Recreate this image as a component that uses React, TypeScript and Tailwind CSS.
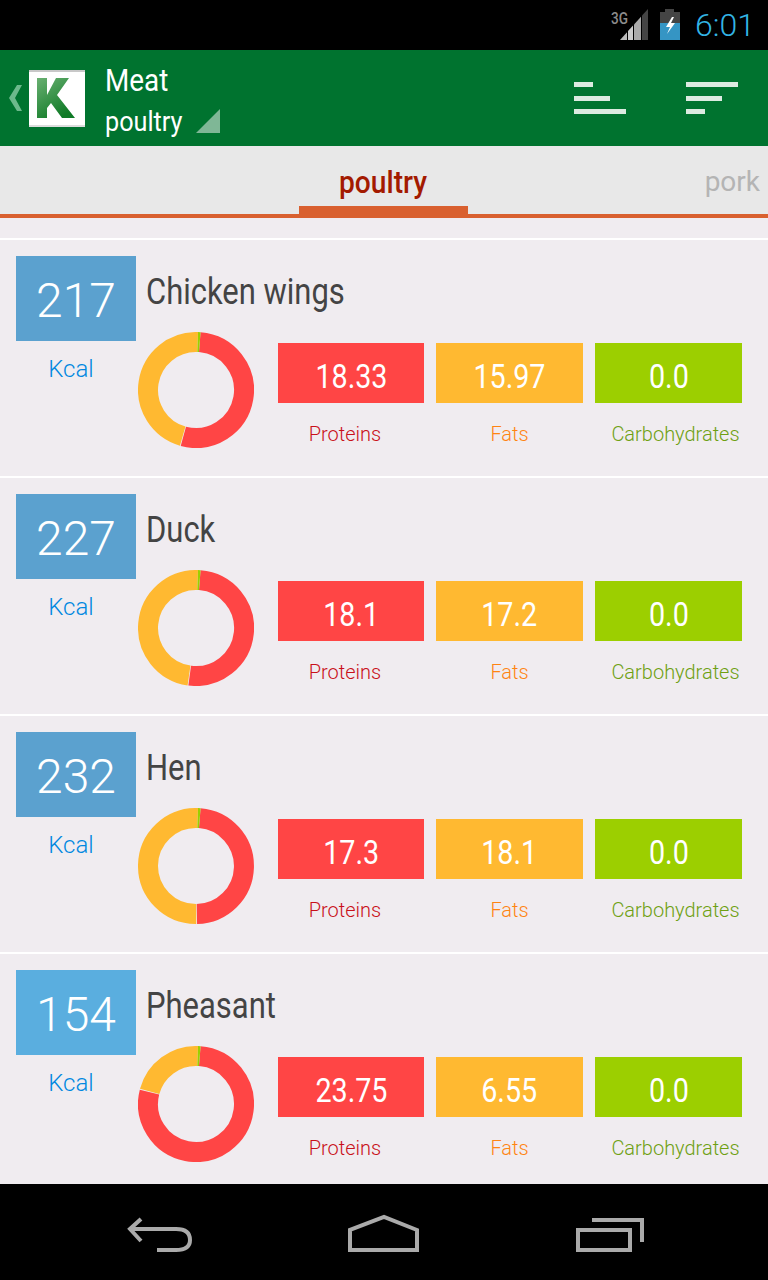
const foods = [
  { kcal: '217', name: 'Chicken wings', p: '18.33', f: '15.97', c: '0.0', box: 'bg-[#5ba1cf]' },
  { kcal: '227', name: 'Duck', p: '18.1', f: '17.2', c: '0.0', box: 'bg-[#5ba1cf]' },
  { kcal: '232', name: 'Hen', p: '17.3', f: '18.1', c: '0.0', box: 'bg-[#5ba1cf]' },
  { kcal: '154', name: 'Pheasant', p: '23.75', f: '6.55', c: '0.0', box: 'bg-[#5aaedf]' },
];

function arc(from: number, to: number) {
  const r = 48;
  const pt = (deg: number) => {
    const a = ((deg - 90) * Math.PI) / 180;
    return `${(58 + r * Math.cos(a)).toFixed(2)} ${(58 + r * Math.sin(a)).toFixed(2)}`;
  };
  return `M${pt(from)} A${r} ${r} 0 ${to - from > 180 ? 1 : 0} 1 ${pt(to)}`;
}

function Donut({ p, f }: { p: number; f: number }) {
  const split = 4.5 + (p / (p + f)) * 357;
  return (
    <svg width="116" height="116" viewBox="0 0 116 116" className="mt-[2px] shrink-0">
      <g fill="none" strokeWidth="20">
        <path d={arc(4.5, split)} stroke="#ff4545" />
        <path d={arc(split + 0.8, 362)} stroke="#ffb931" />
        <path d={arc(362, 364.5)} stroke="#9ccf00" />
      </g>
    </svg>
  );
}

function Macro({ value, label, box, text, w, shift }: { value: string; label: string; box: string; text: string; w: string; shift: string }) {
  return (
    <div className={`flex flex-col items-center ${w}`}>
      <div className={`flex h-[60px] w-full items-center justify-center pt-[7px] text-[33px] text-white ${box}`}>
        <span className="inline-block origin-center scale-x-[0.87]">{value}</span>
      </div>
      <div className={`mt-[19px] text-[20px] leading-6 font-light whitespace-nowrap ${text} ${shift}`}>{label}</div>
    </div>
  );
}

function FoodRow({ food }: { food: (typeof foods)[number] }) {
  return (
    <div className="flex h-[238px] border-t-2 border-white pt-4 pl-4">
      <div className="flex w-[120px] shrink-0 flex-col items-center">
        <div className={`flex h-[85px] w-full items-center justify-center pt-[5px] text-[48px] font-light text-white ${food.box}`}>
          {food.kcal}
        </div>
        <div className="mt-[14px] pr-[10px] text-[24px] leading-7 font-light text-[#0088e0]">Kcal</div>
      </div>
      <div className="flex flex-col">
        <div className="ml-[10px] h-[74px] origin-left scale-x-[0.86] text-[36px] leading-[72px] font-normal whitespace-nowrap text-[#444444]">
          {food.name}
        </div>
        <div className="ml-[2px] flex items-start">
          <Donut p={parseFloat(food.p)} f={parseFloat(food.f)} />
          <div className="mt-[13px] ml-6 flex gap-3">
            <Macro value={food.p} label="Proteins" box="bg-[#ff4545]" text="text-[#c9101a]" w="w-[146px]" shift="pr-[12px]" />
            <Macro value={food.f} label="Fats" box="bg-[#ffb931]" text="text-[#ff8412]" w="w-[147px]" shift="" />
            <Macro value={food.c} label="Carbohydrates" box="bg-[#9ccf00]" text="text-[#6ea012]" w="w-[147px]" shift="pl-[14px]" />
          </div>
        </div>
      </div>
    </div>
  );
}

export default function App() {
  return (
    <div className="flex h-[1280px] w-[768px] flex-col overflow-hidden bg-[#f0ecf0] font-['Roboto',sans-serif]">
      <div className="flex h-[50px] items-center justify-end bg-black pr-[13px]">
        <div className="relative mr-[11px] h-[32px] w-[38px]">
          <span className="absolute top-[2px] left-0 origin-left scale-x-[0.85] text-[16px] leading-4 font-medium text-[#8c8c8c]">3G</span>
          <svg width="30" height="32" viewBox="0 0 30 32" className="absolute top-0 left-[8px]">
            <path d="M1 31 L8 23.2 V31Z" fill="#bbbbbb" />
            <path d="M9 22.1 L14 16.6 V31 H9Z" fill="#cccccc" />
            <path d="M15 15.5 L22 7.7 V31 H15Z" fill="#aaaaaa" />
            <path d="M23 6.6 L29 0 V31 H23Z" fill="#444444" />
          </svg>
        </div>
        <svg width="20" height="32" viewBox="0 0 20 32" className="mr-[15px]">
          <path d="M5 0 H14 V3 H20 V31 H0 V3 H5Z" fill="#444444" />
          <rect x="0" y="14" width="20" height="17" fill="#3595c4" />
          <path d="M12 8 L6 18 H10 L7 25 L15 14 H11 L14 8Z" fill="#ffffff" />
        </svg>
        <span className="text-[32px] leading-none font-light text-[#33b5e5]">6:01</span>
      </div>

      <div className="flex h-[96px] items-center bg-[#00732f]">
        <svg width="16" height="28" viewBox="0 0 16 28" className="ml-[8px]">
          <path d="M14 1 L7 14 L14 27 H9 L1 14 L9 1Z" fill="#6db98c" />
        </svg>
        <svg width="56" height="57" viewBox="0 0 56 57" className="ml-[5px]">
          <defs>
            <linearGradient id="kGrad" x1="0" y1="0" x2="0.6" y2="1">
              <stop offset="0" stopColor="#6ab072" />
              <stop offset="1" stopColor="#0f7a26" />
            </linearGradient>
          </defs>
          <rect width="56" height="57" fill="#ffffff" />
          <rect width="56" height="2" fill="#c8c8c8" />
          <rect y="55" width="56" height="2" fill="#dddddd" />
          <path d="M8 8 H18 V25 L27 8 H40 L28 25 L46 48 H33 L22 33 L18 38 V48 H8Z" fill="url(#kGrad)" />
        </svg>
        <div className="ml-[20px] flex flex-col pt-[4px]">
          <div className="h-[44px] origin-left scale-x-[0.87] text-[32px] leading-[42px] text-white">Meat</div>
          <div className="flex h-[38px] items-center">
            <span className="w-[91px] origin-left scale-x-[0.9] text-[28px] leading-8 whitespace-nowrap text-white">poultry</span>
            <svg width="24" height="24" viewBox="0 0 24 24" className="-mt-[2px]">
              <path d="M24 0 V24 H0Z" fill="#7fb796" />
            </svg>
          </div>
        </div>
        <svg width="52" height="34" viewBox="0 0 52 34" className="mt-[2px] mr-[60px] ml-auto">
          <g fill="#dcebe1">
            <rect x="0" y="0" width="19" height="5" />
            <rect x="0" y="14" width="36" height="5" />
            <rect x="0" y="27" width="52" height="5" />
          </g>
        </svg>
        <svg width="52" height="34" viewBox="0 0 52 34" className="mt-[2px] mr-[30px]">
          <g fill="#dcebe1">
            <rect x="0" y="0" width="52" height="5" />
            <rect x="0" y="14" width="36" height="5" />
            <rect x="0" y="27" width="19" height="5" />
          </g>
        </svg>
      </div>

      <div className="relative h-[72px] border-b-4 border-[#d9602f] bg-[#e8e8e8]">
        <div className="absolute top-0 left-[299px] flex h-[68px] w-[169px] justify-center border-b-8 border-[#d9602f]">
          <span className="origin-center scale-x-[0.88] text-[32px] leading-[72px] font-medium whitespace-nowrap text-[#a31a00]">
            poultry
          </span>
        </div>
        <span className="absolute top-0 right-[8px] text-[28px] leading-[72px] text-[#b4b4b4]">pork</span>
      </div>

      <div className="h-[20px] shrink-0" />
      <div className="flex-1 overflow-hidden">
        {foods.map((food) => (
          <FoodRow key={food.name} food={food} />
        ))}
      </div>

      <div className="flex h-[96px] shrink-0 items-center bg-black">
        <svg width="768" height="96" viewBox="0 0 768 96">
          <g fill="none" stroke="#aaaaaa" strokeWidth="4">
            <path d="M141 35 L130 45 L141 57 M130 45 H176 Q190 45 190 56 Q190 66 176 66 H157" />
            <path d="M350 66 V46 L384 33 L417 46 V66Z" />
            <path d="M578 46 H630 V66 H578Z" />
            <path d="M592 36 H642 V58" />
          </g>
        </svg>
      </div>
    </div>
  );
}
